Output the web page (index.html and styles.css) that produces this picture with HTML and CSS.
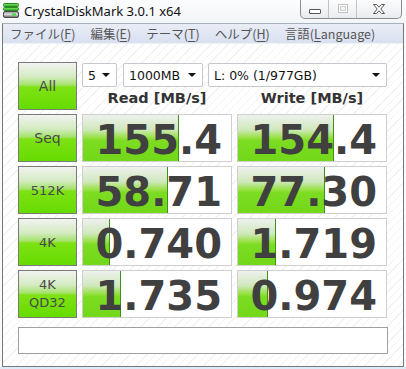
FILE: index.html
```html
<!DOCTYPE html>
<html lang="ja">
<head>
    <meta charset="UTF-8">
    <title>CrystalDiskMark 3.0.1 x64</title>
    <link rel="stylesheet" href="styles.css">
</head>
<body>
    <div class="titlebar">
        <svg class="appicon" width="16" height="15" viewBox="0 0 16 15">
            <defs>
                <linearGradient id="g1" x1="0" y1="0" x2="0" y2="1">
                    <stop offset="0" stop-color="#8ee86a"/>
                    <stop offset="1" stop-color="#22a820"/>
                </linearGradient>
                <linearGradient id="g2" x1="0" y1="0" x2="0" y2="1">
                    <stop offset="0" stop-color="#9a9a9a"/>
                    <stop offset="0.5" stop-color="#d8d8d8"/>
                    <stop offset="1" stop-color="#5a5a5a"/>
                </linearGradient>
            </defs>
            <rect x="0.5" y="0.5" width="15" height="3" rx="1" fill="url(#g1)" stroke="#2a8a22"/>
            <rect x="0.5" y="4.5" width="15" height="3" rx="1" fill="url(#g1)" stroke="#2a8a22"/>
            <rect x="0.5" y="8.5" width="15" height="6" rx="1.5" fill="url(#g2)" stroke="#4a4a4a"/>
            <rect x="9" y="10.5" width="4" height="2" fill="#3ee03a"/>
        </svg>
        <span class="title">CrystalDiskMark 3.0.1 x64</span>
        <div class="winbtns">
            <div class="wb wb-min"><span class="glyph-min"></span></div>
            <div class="wb wb-max"><span class="glyph-max"></span></div>
            <div class="wb wb-close">
                <svg width="14" height="12" viewBox="0 0 14 12">
                    <path d="M1.5 1.5 H4.5 L7 4.2 L9.5 1.5 H12.5 L8.8 6 L12.5 10.5 H9.5 L7 7.8 L4.5 10.5 H1.5 L5.2 6 Z" fill="#fff" stroke="#555" stroke-width="1"/>
                </svg>
            </div>
        </div>
    </div>

    <div class="frame">
        <div class="menubar">
            <span class="menu">ファイル(<u>F</u>)</span>
            <span class="menu">編集(<u>E</u>)</span>
            <span class="menu">テーマ(<u>T</u>)</span>
            <span class="menu">ヘルプ(<u>H</u>)</span>
            <span class="menu">言語(<u>L</u>anguage)</span>
        </div>

        <div class="client">
            <div class="board">
                <div class="btn">All</div>
                <div class="top">
                    <div class="selects">
                        <div class="select sel-count">5<i class="arrow"></i></div>
                        <div class="select sel-size">1000MB<i class="arrow"></i></div>
                        <div class="select sel-drive">L: 0% (1/977GB)<i class="arrow"></i></div>
                    </div>
                    <div class="heads">
                        <div class="head">Read [MB/s]</div>
                        <div class="head">Write [MB/s]</div>
                    </div>
                </div>

                <div class="btn">Seq</div>
                <div class="cell"><div class="bar" style="width: 96px"></div><div class="val">155.4</div></div>
                <div class="cell"><div class="bar" style="width: 96px"></div><div class="val">154.4</div></div>

                <div class="btn btn-plain">512K</div>
                <div class="cell"><div class="bar" style="width: 85px"></div><div class="val">58.71</div></div>
                <div class="cell"><div class="bar" style="width: 87px"></div><div class="val">77.30</div></div>

                <div class="btn btn-plain">4K</div>
                <div class="cell"><div class="bar" style="width: 27px"></div><div class="val">0.740</div></div>
                <div class="cell"><div class="bar" style="width: 38px"></div><div class="val">1.719</div></div>

                <div class="btn btn-plain btn-two">4K<br>QD32</div>
                <div class="cell"><div class="bar" style="width: 38px"></div><div class="val">1.735</div></div>
                <div class="cell"><div class="bar" style="width: 30px"></div><div class="val">0.974</div></div>
            </div>

            <div class="status"></div>
        </div>
    </div>
    <div class="bottomstrip"></div>
</body>
</html>
```

FILE: styles.css
```css
html, body {
    margin: 0;
    padding: 0;
}
body {
    width: 406px;
    height: 369px;
    overflow: hidden;
    background: #f7f9fb;
    font-family: "DejaVu Sans", sans-serif;
}

/* title bar */
.titlebar {
    height: 23px;
    display: flex;
    align-items: flex-start;
    background: linear-gradient(#fbfcfd, #f3f5f8);
}
.appicon {
    margin: 3px 0 0 3px;
}
.title {
    margin: 2px 0 0 5px;
    font-family: "Noto Sans", sans-serif;
    font-size: 13px;
    color: #111;
}
.winbtns {
    margin-left: auto;
    margin-right: 4px;
    display: flex;
    height: 19px;
    margin-top: -1px;
    border: 1px solid #8c8c8c;
    border-top: none;
    border-radius: 0 0 5px 5px;
    background: linear-gradient(#fdfdfd, #e9ecef);
    overflow: hidden;
}
.wb {
    display: flex;
    align-items: center;
    justify-content: center;
}
.wb-min {
    width: 27px;
    border-right: 1px solid #c4c4c4;
}
.wb-max {
    width: 27px;
    border-right: 1px solid #c4c4c4;
}
.wb-close {
    width: 44px;
}
.glyph-min {
    width: 10px;
    height: 3px;
    margin-top: 6px;
    border: 1px solid #555;
    border-radius: 1px;
    background: #fff;
}
.glyph-max {
    width: 8px;
    height: 7px;
    border: 1px solid #c2c2c2;
    box-shadow: inset 0 0 0 1px #fff, inset 0 0 0 2px #d0d0d0;
}

/* window frame */
.frame {
    margin: 0 2px 0 2px;
    height: 342px;
    border: 1px solid #777;
    border-top: 1px solid #a8b0bc;
    background: #fff repeating-linear-gradient(135deg, #fff 0, #fff 5px, #f2f2f2 5px, #f2f2f2 6px);
}
.menubar {
    height: 19px;
    display: flex;
    align-items: center;
    padding-left: 7px;
    background: linear-gradient(#e9edf6, #d9e0f0);
    border-bottom: 1px solid #eef1f8;
    font-family: "Noto Sans CJK JP", sans-serif;
    font-size: 12.5px;
    color: #555;
}
.menu {
    margin-right: 15px;
    line-height: 19px;
}
.menu u {
    text-decoration-thickness: 1px;
    text-underline-offset: 2px;
}

.client {
    padding: 18px 0 0 15px;
}
.board {
    display: grid;
    grid-template-columns: 59px 150px 150px;
    grid-auto-rows: 48px;
    column-gap: 5px;
    row-gap: 4px;
}

/* green buttons */
.btn {
    box-sizing: border-box;
    border: 1px solid #7a7a7a;
    background: linear-gradient(#f2f3f0 0%, #d4ebc2 30%, #a4e26a 48%, #7ee214 52%, #66dc00 100%);
    display: flex;
    align-items: center;
    justify-content: center;
    font-family: "DejaVu Sans", sans-serif;
    font-size: 14px;
    color: #4a4a4a;
}
.btn-plain {
    font-size: 13px;
}
.btn-two {
    text-align: center;
    line-height: 18px;
}

.top {
    grid-column: 2 / 4;
    display: flex;
    flex-direction: column;
}
.selects {
    display: flex;
    gap: 5px;
    margin-top: 1px;
    height: 24px;
}
.select {
    box-sizing: border-box;
    height: 24px;
    border: 1px solid #c4c8cc;
    border-radius: 2px;
    background: #fff;
    display: flex;
    align-items: center;
    padding-left: 5px;
    font-size: 12.5px;
    color: #111;
}
.sel-count { width: 35px; margin-right: 1px; }
.sel-size { width: 80px; }
.sel-drive { width: 179px; }
.arrow {
    margin-left: auto;
    margin-right: 6px;
    width: 0;
    height: 0;
    border-left: 4px solid transparent;
    border-right: 4px solid transparent;
    border-top: 4px solid #111;
}
.heads {
    display: grid;
    grid-template-columns: 150px 150px;
    column-gap: 5px;
    flex: 1;
}
.head {
    text-align: center;
    font-weight: bold;
    font-size: 14.5px;
    color: #333;
    padding-top: 3px;
}

/* result cells */
.cell {
    box-sizing: border-box;
    border: 1px solid #cfcfcf;
    background: #fff;
    display: grid;
}
.bar, .val {
    grid-area: 1 / 1;
}
.bar {
    box-sizing: border-box;
    height: 100%;
    border-right: 1px solid #3f8f1c;
    background: linear-gradient(#eff1ee 0%, #cfe8bc 32%, #96e040 50%, #7cdc22 56%, #72d818 100%);
}
.val {
    align-self: center;
    justify-self: end;
    margin-right: 9px;
    margin-top: 3px;
    font-family: "DejaVu Sans", sans-serif;
    font-weight: bold;
    font-size: 40px;
    line-height: 40px;
    color: #404040;
}

.status {
    box-sizing: border-box;
    width: 370px;
    height: 27px;
    margin-top: 9px;
    border: 1px solid #a0a0a0;
    background: #fff;
}

.bottomstrip {
    height: 3px;
    background: #dcecf8;
}
```
